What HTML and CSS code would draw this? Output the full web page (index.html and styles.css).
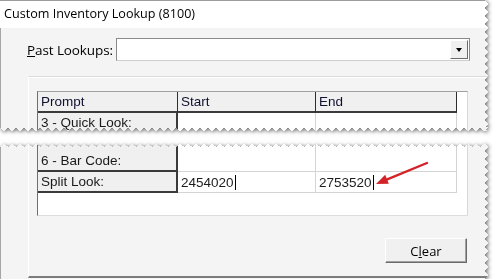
FILE: index.html
```html
<!DOCTYPE html>
<html>
<head>
<meta charset="utf-8">
<link rel="stylesheet" href="styles.css">
</head>
<body>
<div class="page">
  <div class="shade">
    <div class="piece piece-top">
      <div class="titlebar">Custom Inventory Lookup (8100)</div>
      <div class="body">
        <div class="lookup-row">
          <label class="lookup-label"><u>P</u>ast Lookups:</label>
          <div class="combo">
            <div class="combo-btn"><span class="tri"></span></div>
          </div>
        </div>
        <div class="panel panel-top">
          <div class="grid">
            <div class="row head">
              <div class="cell h prompt-h">Prompt</div>
              <div class="cell h">Start</div>
              <div class="cell h">End</div>
            </div>
            <div class="row">
              <div class="cell prompt">3 - Quick Look:</div>
              <div class="cell val"></div>
              <div class="cell val"></div>
            </div>
          </div>
        </div>
      </div>
    </div>
  </div>

  <div class="shade shade-bottom">
    <div class="piece piece-bottom">
      <div class="body body-bottom">
        <div class="panel panel-bottom">
          <div class="grid grid-bottom">
            <div class="row row-first">
              <div class="cell prompt">6 - Bar Code:</div>
              <div class="cell val"></div>
              <div class="cell val"></div>
            </div>
            <div class="row">
              <div class="cell prompt">Split Look:</div>
              <div class="cell val">2454020<span class="caret"></span></div>
              <div class="cell val">2753520<span class="caret"></span></div>
            </div>
            <div class="grid-empty"></div>
          </div>
          <div class="actions">
            <button class="btn">C<u>l</u>ear</button>
          </div>
        </div>
      </div>
      <svg class="arrow" width="488" height="136" viewBox="0 0 488 136">
        <line x1="427" y1="20" x2="386" y2="36.8" stroke="#d42229" stroke-width="2.4" stroke-linecap="round"/>
        <polygon points="376,41 388.8,40.8 385.2,31.8" fill="#d42229"/>
      </svg>
    </div>
  </div>
</div>
</body>
</html>
```

FILE: styles.css
```css
* { box-sizing: border-box; }
html, body { margin: 0; padding: 0; }
body {
  background: #ffffff;
  width: 495px;
  height: 279px;
  overflow: hidden;
}
.page {
  width: 495px;
  height: 279px;
  display: flex;
  flex-direction: column;
}
.shade {
  width: 488px;
  filter: drop-shadow(1px 1px 2px rgba(0,0,0,0.6));
}
.shade-bottom {
  margin-top: 12px;
}
.piece {
  position: relative;
  width: 488px;
  background: #f4f4f4;
  font-family: "Liberation Sans", Arial, sans-serif;
  color: #000;
}
.piece-top {
  height: 131px;
  -webkit-mask:
    linear-gradient(#000 0 0) left top / calc(100% - 4px) calc(100% - 4px) no-repeat,
    conic-gradient(from -45deg at 50% 100%, #000 90deg, #0000 0) left bottom / 8px 4px repeat-x,
    conic-gradient(from 225deg at 100% 50%, #000 90deg, #0000 0) right top / 4px 8px repeat-y;
  mask:
    linear-gradient(#000 0 0) left top / calc(100% - 4px) calc(100% - 4px) no-repeat,
    conic-gradient(from -45deg at 50% 100%, #000 90deg, #0000 0) left bottom / 8px 4px repeat-x,
    conic-gradient(from 225deg at 100% 50%, #000 90deg, #0000 0) right top / 4px 8px repeat-y;
}
.piece-bottom {
  height: 136px;
  -webkit-mask:
    linear-gradient(#000 0 0) left bottom / calc(100% - 4px) calc(100% - 4px) no-repeat,
    conic-gradient(from 135deg at 50% 0%, #000 90deg, #0000 0) left top / 8px 4px repeat-x,
    conic-gradient(from 225deg at 100% 50%, #000 90deg, #0000 0) right top / 4px 8px repeat-y;
  mask:
    linear-gradient(#000 0 0) left bottom / calc(100% - 4px) calc(100% - 4px) no-repeat,
    conic-gradient(from 135deg at 50% 0%, #000 90deg, #0000 0) left top / 8px 4px repeat-x,
    conic-gradient(from 225deg at 100% 50%, #000 90deg, #0000 0) right top / 4px 8px repeat-y;
}
.titlebar {
  height: 28px;
  background: #ffffff;
  border-top: 1px solid #9c9c9c;
  padding: 3px 0 0 4px;
  font-family: "Open Sans", "Noto Sans", sans-serif;
  font-size: 12.6px;
  line-height: 20px;
  color: #000;
}
.body {
  border-left: 1px solid #a6a6a6;
  background: #f4f4f4;
  height: 103px;
}
.lookup-row {
  display: flex;
  align-items: center;
  padding-top: 10px;
}
.lookup-label {
  width: 89px;
  margin-left: 26px;
  font-family: "Open Sans", "Noto Sans", sans-serif;
  font-size: 13.5px;
  letter-spacing: -0.1px;
  color: #000;
}
.combo {
  width: 354px;
  height: 23px;
  background: #fff;
  border: 1px solid #8a8a8a;
  border-bottom-color: #cfcfcf;
  display: flex;
  justify-content: flex-end;
  align-items: center;
  padding-right: 1px;
}
.combo-btn {
  width: 18px;
  height: 19px;
  background: #f0f0f0;
  border: 1px solid;
  border-color: #ffffff #6b6b6b #6b6b6b #ffffff;
  display: flex;
  align-items: center;
  justify-content: center;
}
.tri {
  width: 0;
  height: 0;
  border-left: 3.5px solid transparent;
  border-right: 3.5px solid transparent;
  border-top: 4px solid #000;
}
.panel {
  margin-left: 27px;
  border-left: 1px solid #ffffff;
  padding-left: 8px;
}
.panel-top {
  margin-top: 15px;
  border-top: 1px solid #dadada;
  box-shadow: inset 0 1px 0 #ffffff;
  padding-top: 14px;
  height: 60px;
}
.grid {
  width: 431px;
  background: #ffffff;
  border-left: 1px solid #6e6e6e;
  border-right: 1px solid #d8d8d8;
}
.grid:not(.grid-bottom) {
  border-top: 1px solid #a0a0a0;
}
.row {
  display: flex;
  height: 21px;
}
.cell {
  font-size: 13.5px;
  line-height: 18px;
  padding-left: 3px;
  white-space: nowrap;
  display: flex;
  align-items: flex-end;
  padding-bottom: 0;
}
.cell:nth-child(1) { width: 140px; }
.cell:nth-child(2) { width: 138px; }
.cell:nth-child(3) { width: 141px; }
.head .cell.h {
  background: #f0f0f0;
  border-right: 1px solid #2e2e2e;
  border-bottom: 2px solid #3a3a3a;
  color: #101030;
}
.prompt {
  background: #f0f0f0;
  border-right: 2px solid #3a3a3a;
  border-bottom: 2px solid #3a3a3a;
  color: #1a1a1a;
}
.val {
  background: #ffffff;
  border-right: 1px solid #d4d4d4;
  border-bottom: 1px solid #d4d4d4;
  color: #1c1c1c;
}
.row-first { height: 29px; }
.caret {
  display: inline-block;
  width: 1px;
  height: 15px;
  background: #000;
  margin-left: 1px;
  align-self: center;
}
.body-bottom {
  height: 136px;
  display: flex;
  flex-direction: column;
}
.panel-bottom {
  flex: 1;
  border-bottom: 2px solid #7c7c7c;
  margin-bottom: 1px;
}
.grid-bottom {
  border-bottom: 1px solid #dcdcdc;
}
.grid-empty {
  height: 22px;
  background: #ffffff;
}
.actions {
  display: flex;
  justify-content: flex-end;
  padding-right: 21px;
  margin-top: 22px;
}
.btn {
  width: 82px;
  height: 25px;
  background: #f0f0f0;
  border: 1px solid;
  border-color: #ffffff #6b6b6b #6b6b6b #ffffff;
  box-shadow: inset -1px -1px 0 #a0a0a0;
  font-family: "Open Sans", "Noto Sans", sans-serif;
  font-size: 13px;
  color: #000;
  padding: 0;
}
.arrow {
  position: absolute;
  left: 0;
  top: 0;
  pointer-events: none;
}
```
